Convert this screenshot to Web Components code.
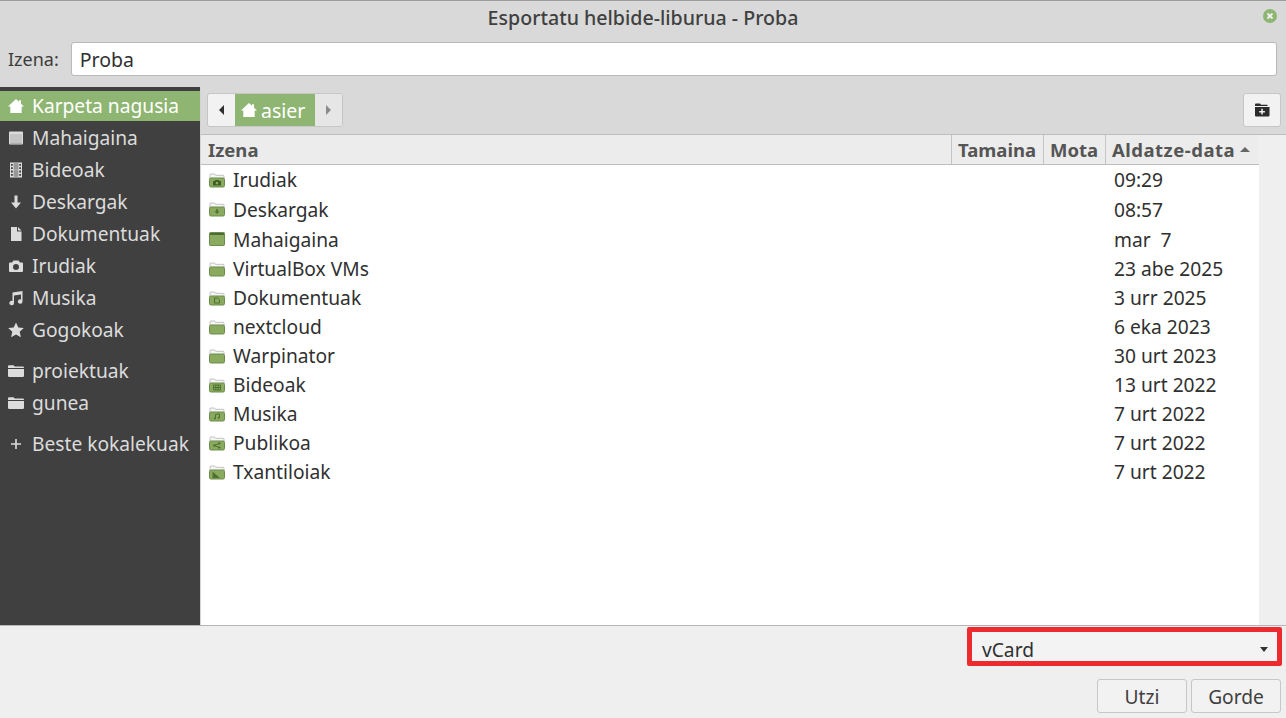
<!DOCTYPE html>
<html lang="eu">
<head>
<meta charset="utf-8">
<title>Esportatu helbide-liburua - Proba</title>
<style>
  html, body { margin: 0; height: 100%; overflow: hidden; }
  body { font: 19.2px "Noto Sans", "Open Sans", sans-serif; color: #303030; background: #efefef; }
</style>
</head>
<body>
<export-dialog></export-dialog>

<script>
// Iconos simbólicos de la barra lateral (viewBox 16x16)
const SYMBOLS = {
    home: '<path d="M8 1 0 8.600h2.300V15h11.400V8.600H16l-3-2.900V2.300h-2v1.500z"/>',
    desktop: '<path fill-rule="evenodd" d="M2 1.500h12a1 1 0 0 1 1 1v11a1 1 0 0 1-1 1H2a1 1 0 0 1-1-1v-11a1 1 0 0 1 1-1zM2 4v9.500h12V4z"/><rect x="2" y="4" width="12" height="9.500" opacity=".85"/>',
    video: '<path fill-rule="evenodd" d="M2 .5h12v15H2zM3 2v1.800h1.800V2zm0 3.200V7h1.800V5.200zm0 3.400v1.800h1.800V8.600zm0 3.400v1.800h1.800V12zM11.200 2v1.800H13V2zm0 3.200V7H13V5.200zm0 3.400v1.800H13V8.600zm0 3.400v1.800H13V12zM5.800 1.500v6h4.400v-6zm0 7v6h4.400v-6z"/><path opacity=".55" d="M5.800 1.500h4.400v6H5.800zM5.800 8.500h4.400v6H5.800z"/>',
    download: '<path d="M6.500 1.500h3v7H13L8 14.500 3 8.500h3.500z"/>',
    document: '<path d="M3 1h6v4.500h4.500V15H3zM10 1l3.500 3.500H10z"/>',
    camera: '<path fill-rule="evenodd" d="M5.500 2.500h5L12 4.500h2a1 1 0 0 1 1 1V13a1 1 0 0 1-1 1H2a1 1 0 0 1-1-1V5.500a1 1 0 0 1 1-1h2zM8 6a3 3 0 1 0 0 6 3 3 0 0 0 0-6z"/>',
    music: '<path d="M4.500 2.500 14.500 1v10.500h-.02A2.300 2.100 0 1 1 13 9.600V4.500L6 5.500v7.500h-.02A2.300 2.100 0 1 1 4.500 11.100z"/>',
    star: '<path d="M8 .5l2.300 5 5.500.6-4.100 3.700 1.200 5.400L8 12.500 3.100 15.200l1.200-5.400L.2 6.100l5.500-.6z"/>',
    folder: '<path d="M0 3.500a1.200 1.200 0 0 1 1.200-1.200h4.300l1.200 1.300h8.100A1.200 1.200 0 0 1 16 4.800V5H0zM0 6h16v6.800a1.200 1.200 0 0 1-1.200 1.200H1.200A1.200 1.200 0 0 1 0 12.800z"/>',
    plus: '<path d="M7.200 3h1.600v4.200H13v1.600H8.800V13H7.200V8.800H3V7.200h4.200z"/>',
};

class PlaceIcon extends HTMLElement {
    connectedCallback() {
        const name = this.getAttribute('name');
        this.attachShadow({ mode: 'open' }).innerHTML = `
            <style>
                :host { display: inline-flex; width: 16px; height: 16px; flex: none; }
                svg { width: 100%; height: 100%; fill: currentColor; display: block; }
            </style>
            <svg viewBox="0 0 16 16">${SYMBOLS[name] || ''}</svg>`;
    }
}
customElements.define('place-icon', PlaceIcon);

// Emblemas pequeños sobre la carpeta verde
const EMBLEMS = {
    camera: '<path fill="#3f5f26" fill-rule="evenodd" d="M6.300 6.500h3.400l.7 1H12v4.500H4V7.500h1.600zM8 8.300a1.300 1.300 0 1 0 0 2.600 1.300 1.300 0 0 0 0-2.600z"/>',
    download: '<path fill="#4f7232" d="M7.200 6.500h1.600v2.300h1.700L8 11.500 5.500 8.800h1.700z"/>',
    document: '<path fill="none" stroke="#4f7232" d="M5.500 6.500h3.200l1.800 1.800v3.200h-5z"/>',
    video: '<path fill="none" stroke="#4f7232" d="M4.500 6.500h7v5h-7zM6.800 6.500v5M9.200 6.500v5M4.500 9h7"/>',
    music: '<path fill="none" stroke="#4f7232" d="M6.500 11V7l4-.7V10"/><circle cx="5.700" cy="11" r="1" fill="#4f7232"/><circle cx="9.700" cy="10.300" r="1" fill="#4f7232"/>',
    share: '<path stroke="#4f7232" fill="none" d="M5.500 9l4.500-2M5.500 9l4.500 2"/><circle cx="5.500" cy="9" r="1.300" fill="#4f7232"/><circle cx="10.300" cy="6.900" r="1.200" fill="#4f7232"/><circle cx="10.300" cy="11.100" r="1.200" fill="#4f7232"/>',
    template: '<path fill="#4f7232" d="M3.500 6 11 12.500H3.500z"/>',
};

class FolderIcon extends HTMLElement {
    connectedCallback() {
        const emblem = this.getAttribute('emblem');
        const art = emblem === 'desktop'
            ? `<rect x=".5" y="1.500" width="15" height="13" rx=".8" fill="#8aab5f" stroke="#6b8d4a"/>
               <rect x="1" y="2" width="14" height="2" fill="#4e6a36"/>`
            : `<path d="M1 7V2.800a.8.8 0 0 1 .8-.8h3.700l1 1.300h7.700a.8.8 0 0 1 .8.8V7z" fill="#f6f6f6" stroke="#b4b4b4" stroke-width=".8"/>
               <rect x=".5" y="6" width="15" height="9" rx="1.500" fill="#8aab5f" stroke="#6b8d4a"/>
               <g transform="translate(0 1.500)">${EMBLEMS[emblem] || ''}</g>`;
        this.attachShadow({ mode: 'open' }).innerHTML = `
            <style>
                :host { display: inline-flex; width: 16px; height: 16px; flex: none; }
                svg { width: 100%; height: 100%; display: block; }
            </style>
            <svg viewBox="0 0 16 16">${art}</svg>`;
    }
}
customElements.define('folder-icon', FolderIcon);

class TitleBar extends HTMLElement {
    constructor() {
        super();
        this.attachShadow({ mode: 'open' }).innerHTML = `
            <style>
                :host {
                    display: flex; align-items: center; justify-content: center;
                    height: 35px; box-sizing: content-box; flex: none; position: relative;
                    border-top: 1px solid #9c9c9c; background: #d9d9d9;
                    color: #404040; font-size: 19.600px; font-weight: 500;
                }
                span { margin-bottom: 3px; }
                svg { position: absolute; right: 9px; top: 8px; width: 14px; height: 14px; }
            </style>
            <span><slot></slot></span>
            <svg viewBox="0 0 14 14">
                <circle cx="7" cy="7" r="7" fill="#8fb573"/>
                <path d="M4.500 4.500l5 5M9.500 4.500l-5 5" stroke="#f2f2f2" stroke-width="1.800"/>
            </svg>`;
    }
}
customElements.define('title-bar', TitleBar);

class NameRow extends HTMLElement {
    constructor() {
        super();
        this.attachShadow({ mode: 'open' }).innerHTML = `
            <style>
                :host {
                    display: flex; align-items: center; gap: 12px; flex: none;
                    height: 51px; padding: 0 9px 5px 8px; box-sizing: border-box;
                    background: #d9d9d9; font-size: 18px; color: #3c3c3c;
                }
                .entry {
                    flex: 1; height: 34px; box-sizing: border-box; padding: 0 8px;
                    display: flex; align-items: center; background: #fff;
                    border: 1px solid #b9b9b9; border-radius: 3px; font-size: 19.500px; color: #303030;
                }
            </style>
            <span>Izena:</span>
            <div class="entry"><slot></slot></div>`;
    }
}
customElements.define('name-row', NameRow);

class PlacesSidebar extends HTMLElement {
    constructor() {
        super();
        const groups = [
            [['home', 'Karpeta nagusia', true], ['desktop', 'Mahaigaina'], ['video', 'Bideoak'], ['download', 'Deskargak'],
             ['document', 'Dokumentuak'], ['camera', 'Irudiak'], ['music', 'Musika'], ['star', 'Gogokoak']],
            [['folder', 'proiektuak'], ['folder', 'gunea']],
            [['plus', 'Beste kokalekuak']],
        ];
        const html = groups.map(g => `<div class="group">${g.map(([icon, label, on]) => `
            <div class="place${on ? ' on' : ''}"><place-icon name="${icon}"></place-icon><span>${label}</span></div>`).join('')}</div>`).join('');
        this.attachShadow({ mode: 'open' }).innerHTML = `
            <style>
                :host {
                    display: flex; flex-direction: column; gap: 9px; flex: none;
                    width: 200px; box-sizing: border-box; padding-top: 4px;
                    background: #404040; color: #dcdcdc;
                }
                .place { display: flex; align-items: center; gap: 8px; height: 32px; padding-left: 8px; white-space: nowrap; }
                .place span { margin-bottom: 2px; }
                .place.on { height: 30px; margin-bottom: 1px; background: #8fb573; color: #fff; }
            </style>
            ${html}`;
    }
}
customElements.define('places-sidebar', PlacesSidebar);

class PathBar extends HTMLElement {
    constructor() {
        super();
        this.attachShadow({ mode: 'open' }).innerHTML = `
            <style>
                :host {
                    display: flex; align-items: center; justify-content: space-between; flex: none;
                    height: 48px; box-sizing: border-box; padding: 0 5px 1px 6px;
                    background: #d9d9d9; border-bottom: 1px solid #bdbdbd; font-size: 19.500px;
                }
                .crumbs {
                    display: flex; height: 34px; box-sizing: border-box;
                    border: 1px solid #c6c6c6; border-radius: 3px; overflow: hidden; background: #f2f2f2;
                }
                .nav { width: 27px; display: flex; align-items: center; justify-content: center; }
                .nav.next { background: #e6e6e6; }
                .tri { width: 0; height: 0; border-top: 5px solid transparent; border-bottom: 5px solid transparent; }
                .prev .tri { border-right: 5px solid #303030; }
                .next .tri { border-left: 5px solid #8a8a8a; }
                .here { display: flex; align-items: center; gap: 4px; padding: 0 0 0 6px; width: 80px; box-sizing: border-box; background: #8fb573; color: #fff; }
                .new {
                    width: 38px; height: 34px; box-sizing: border-box; display: flex; align-items: center; justify-content: center;
                    background: #f2f2f2; border: 1px solid #c6c6c6; border-radius: 3px; color: #2b2b2b;
                }
                svg { width: 16px; height: 14px; fill: currentColor; }
            </style>
            <div class="crumbs">
                <div class="nav prev"><i class="tri"></i></div>
                <div class="here"><place-icon name="home"></place-icon><span>asier</span></div>
                <div class="nav next"><i class="tri"></i></div>
            </div>
            <div class="new">
                <svg viewBox="0 0 16 14"><path fill-rule="evenodd" d="M1 1.500a1 1 0 0 1 1-1h4l1 1.300h6.500V3H1zM1 4h14.500v8.500a1 1 0 0 1-1 1H2a1 1 0 0 1-1-1zM7.300 5.800v2.100H5.200v1.500h2.100v2.100h1.500V9.400h2.100V7.900H8.800V5.800z"/></svg>
            </div>`;
    }
}
customElements.define('path-bar', PathBar);

class FileList extends HTMLElement {
    constructor() {
        super();
        const rows = [
            ['camera', 'Irudiak', '09:29'],
            ['download', 'Deskargak', '08:57'],
            ['desktop', 'Mahaigaina', 'mar  7'],
            ['', 'VirtualBox VMs', '23 abe 2025'],
            ['document', 'Dokumentuak', '3 urr 2025'],
            ['', 'nextcloud', '6 eka 2023'],
            ['', 'Warpinator', '30 urt 2023'],
            ['video', 'Bideoak', '13 urt 2022'],
            ['music', 'Musika', '7 urt 2022'],
            ['share', 'Publikoa', '7 urt 2022'],
            ['template', 'Txantiloiak', '7 urt 2022'],
        ];
        const body = rows.map(([emblem, name, date]) => `
            <div class="row">
                <div class="name"><folder-icon emblem="${emblem}"></folder-icon><span>${name}</span></div>
                <div></div><div></div>
                <div class="date">${date}</div>
            </div>`).join('');
        this.attachShadow({ mode: 'open' }).innerHTML = `
            <style>
                :host { display: flex; flex: 1; min-height: 0; background: #efefef; }
                .table { width: 1058px; display: flex; flex-direction: column; background: #fff; }
                .head, .row { display: grid; grid-template-columns: 750px 92px 62px 154px; }
                .head {
                    height: 30px; box-sizing: border-box; background: #ececec; border-bottom: 1px solid #bdbdbd;
                    font-size: 18.500px; font-weight: 700; color: #555;
                }
                .head div { display: flex; align-items: center; gap: 5px; padding-left: 6px; border-left: 1px solid #c4c4c4; white-space: nowrap; }
                .head div:first-child { border-left: 0; padding-left: 7px; }
                .head div:last-child { letter-spacing: .5px; }
                .sort { width: 0; height: 0; border: 5px solid transparent; border-top: 0; border-bottom: 5px solid #666; }
                .row { height: 29px; align-items: center; color: #303030; }
                .row:nth-child(2), .row:nth-child(3) { height: 30px; }
                .name { display: flex; align-items: center; gap: 8px; padding-left: 8px; }
                .date { padding-left: 9px; white-space: pre; }
            </style>
            <div class="table">
                <div class="head">
                    <div>Izena</div><div>Tamaina</div><div>Mota</div>
                    <div>Aldatze-data <i class="sort"></i></div>
                </div>
                <div class="rows">${body}</div>
            </div>`;
    }
}
customElements.define('file-list', FileList);

class DialogFooter extends HTMLElement {
    constructor() {
        super();
        this.attachShadow({ mode: 'open' }).innerHTML = `
            <style>
                :host {
                    display: flex; flex-direction: column; align-items: flex-end; gap: 13px; flex: none;
                    height: 93px; box-sizing: border-box; padding: 1px 5px 0 0;
                    background: #efefef; border-top: 1px solid #b5b5b5;
                }
                .combo {
                    width: 315px; height: 39px; margin-right: -1px; box-sizing: border-box; padding: 5px 9px 0 10px;
                    display: flex; align-items: center; justify-content: space-between;
                    background: #f3f3f3; border: 5px solid #ed2a30; border-radius: 2px;
                }
                .combo i { width: 0; height: 0; border: 4.500px solid transparent; border-bottom: 0; border-top: 5px solid #333; }
                .buttons { display: flex; gap: 4px; }
                .btn {
                    width: 90px; height: 34px; box-sizing: border-box; display: flex; align-items: center; justify-content: center;
                    background: #f2f2f2; border: 1px solid #c6c6c6; border-radius: 3px; color: #404040;
                }
            </style>
            <div class="combo"><span>vCard</span><i></i></div>
            <div class="buttons">
                <div class="btn">Utzi</div>
                <div class="btn">Gorde</div>
            </div>`;
    }
}
customElements.define('dialog-footer', DialogFooter);

class ExportDialog extends HTMLElement {
    constructor() {
        super();
        this.attachShadow({ mode: 'open' }).innerHTML = `
            <style>
                :host { display: flex; flex-direction: column; height: 718px; width: 1286px; }
                .main { display: flex; flex: 1; min-height: 0; }
                .pane { flex: 1; min-width: 0; display: flex; flex-direction: column; border-left: 1px solid #d4d4d4; }
            </style>
            <title-bar>Esportatu helbide-liburua - Proba</title-bar>
            <name-row>Proba</name-row>
            <div class="main">
                <places-sidebar></places-sidebar>
                <div class="pane">
                    <path-bar></path-bar>
                    <file-list></file-list>
                </div>
            </div>
            <dialog-footer></dialog-footer>`;
    }
}
customElements.define('export-dialog', ExportDialog);
</script>
</body>
</html>
